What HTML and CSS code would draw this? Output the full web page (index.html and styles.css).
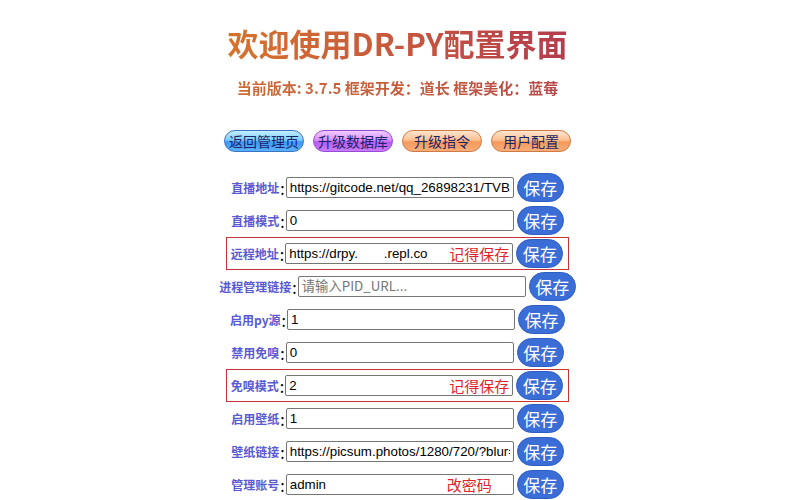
FILE: index.html
```html
<!DOCTYPE html>
<html lang="zh-CN">
<head>
<meta charset="utf-8">
<title>DR-PY配置界面</title>
<link rel="stylesheet" href="styles.css">
</head>
<body>
<h1 class="title"><span class="grad">欢迎使用DR-PY配置界面</span></h1>
<p class="sub"><span class="grad2">当前版本: 3.7.5 框架开发：道长 框架美化：蓝莓</span></p>
<div class="nav">
  <button class="pill blue">返回管理页</button>
  <button class="pill purple">升级数据库</button>
  <button class="pill orange">升级指令</button>
  <button class="pill orange">用户配置</button>
</div>
<div class="form">
  <div class="row"><span class="lbl">直播地址</span><span class="colon">:</span><input class="inp" value="https://gitcode.net/qq_26898231/TVBox/raw/main/live/0830zb.txt"><button class="save">保存</button></div>
  <div class="row"><span class="lbl">直播模式</span><span class="colon">:</span><input class="inp" value="0"><button class="save">保存</button></div>
  <div class="row mark"><span class="lbl">远程地址</span><span class="colon">:</span><span class="field"><input class="inp" value="https://drpy.       .repl.co"><span class="hint hint-a">记得保存</span></span><button class="save">保存</button></div>
  <div class="row"><span class="lbl">进程管理链接</span><span class="colon">:</span><input class="inp" placeholder="请输入PID_URL..."><button class="save">保存</button></div>
  <div class="row"><span class="lbl">启用py源</span><span class="colon">:</span><input class="inp" value="1"><button class="save">保存</button></div>
  <div class="row"><span class="lbl">禁用免嗅</span><span class="colon">:</span><input class="inp" value="0"><button class="save">保存</button></div>
  <div class="row mark"><span class="lbl">免嗅模式</span><span class="colon">:</span><span class="field"><input class="inp" value="2"><span class="hint hint-a">记得保存</span></span><button class="save">保存</button></div>
  <div class="row"><span class="lbl">启用壁纸</span><span class="colon">:</span><input class="inp" value="1"><button class="save">保存</button></div>
  <div class="row"><span class="lbl">壁纸链接</span><span class="colon">:</span><input class="inp" value="https://picsum.photos/1280/720/?blur=10"><button class="save">保存</button></div>
  <div class="row"><span class="lbl">管理账号</span><span class="colon">:</span><span class="field"><input class="inp" value="admin"><span class="hint hint-b">改密码</span></span><button class="save">保存</button></div>
  <div class="row"><span class="lbl">管理密码</span><span class="colon">:</span><input class="inp" value="drpy"><button class="save">保存</button></div>
</div>
</body>
</html>
```
FILE: styles.css
```css
html, body {
  margin: 0;
  padding: 0;
  background: #ffffff;
}
body {
  font-family: "Noto Sans CJK SC", "Noto Sans", sans-serif;
  text-align: center;
  padding-right: 5px;
}
.title {
  margin: 22px 0 0;
  font-size: 31px;
  line-height: 41px;
  font-weight: 700;
}
.grad {
  background: linear-gradient(90deg, #d6732c 0%, #c65540 55%, #b43c4e 100%);
  -webkit-background-clip: text;
  background-clip: text;
  color: transparent;
}
.sub {
  margin: 15px 0 0;
  font-size: 15px;
  line-height: 20px;
  font-weight: 700;
}
.grad2 {
  background: linear-gradient(90deg, #cc6a36 0%, #c45a3e 60%, #b84848 100%);
  -webkit-background-clip: text;
  background-clip: text;
  color: transparent;
}
.nav {
  margin-top: 32px;
  display: flex;
  justify-content: center;
  gap: 9px;
}
.pill {
  width: 80px;
  height: 22px;
  padding: 0;
  border-radius: 11px;
  font-family: "Noto Sans CJK SC", sans-serif;
  font-size: 14px;
  line-height: 20px;
  color: #1c2468;
  cursor: pointer;
}
.blue {
  border: 1px solid #3a74c8;
  background: linear-gradient(180deg, #c4f0ff 0%, #7cccff 45%, #3d9af2 55%, #5ab2fc 100%);
}
.purple {
  border: 1px solid #9a4ad8;
  background: linear-gradient(180deg, #f2ccff 0%, #d890ff 45%, #b85cf2 55%, #c67cfa 100%);
}
.orange {
  border: 1px solid #d07a48;
  background: linear-gradient(180deg, #ffe6d0 0%, #fdc092 45%, #f59a5c 55%, #f8ae78 100%);
}
.form {
  margin-top: 21px;
  display: flex;
  flex-direction: column;
  align-items: center;
}
.row {
  display: flex;
  align-items: center;
  height: 29px;
  margin-bottom: 4px;
}
.row.mark {
  border: 1px solid #c83434;
  padding: 1px 5px 1px 4px;
  margin: -2px 0 2px;
}
.lbl {
  font-size: 12px;
  font-weight: 700;
  color: #5a5ad2;
}
.colon {
  font-size: 16px;
  color: #000;
  margin: 0 1px 0 1px;
}
.field {
  position: relative;
  display: flex;
}
.inp {
  box-sizing: border-box;
  width: 228px;
  height: 21px;
  padding: 1px 3px;
  border: 1px solid #767676;
  border-radius: 2px;
  font-family: "Liberation Sans", Arial, sans-serif;
  font-size: 13.333px;
  color: #000;
  background: #fff;
}
.inp::placeholder {
  color: #757575;
  font-family: "Noto Sans CJK SC", "Liberation Sans", sans-serif;
}
.hint {
  position: absolute;
  top: 50%;
  transform: translateY(-50%);
  font-size: 15px;
  line-height: 18px;
  color: #e0242a;
  white-space: nowrap;
}
.hint-a { right: 4px; }
.hint-b { left: 161px; }
.save {
  margin-left: 3px;
  width: 47px;
  height: 29px;
  padding: 0;
  border: 1px solid #2f5ec2;
  border-radius: 15px;
  background: #3a6dd6;
  color: #fff;
  font-family: "Noto Sans CJK SC", sans-serif;
  font-size: 17px;
  line-height: 27px;
  cursor: pointer;
}
```
